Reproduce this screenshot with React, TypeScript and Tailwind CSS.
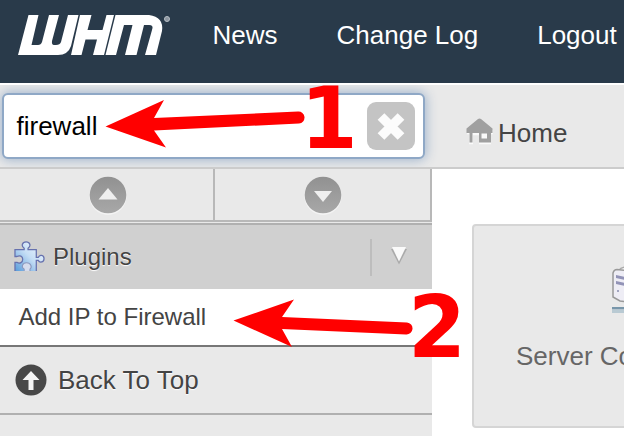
import React from 'react';

const Logo = () => (
  <svg className="ml-[18px] mt-[15px] h-[40px] w-[153px] shrink-0" viewBox="18 15 153 40" fill="#fff">
    <path d="M28.500 15H38.500L31.500 45H38Q41 45 42 42L49 15H59L52 41Q51.500 45 54 45H56Q60 45 61 42L68 15H78.500L71 46Q68 55 58 55H18Z" />
    <path d="M80 15H91.500L87.500 30H102.500L106.500 15H114L104 55H93L97 39.500H85.500L81.500 55H71Z" />
    <path d="M115.500 15H149Q164 17 162 31L156 55H145L152 30Q154 25 149 25H144L136.500 55H125L132.500 25H124L116 55H105.500Z" />
    <circle cx="167" cy="19" r="2.500" fill="#8c96a0" stroke="#b8bfc6" strokeWidth="1" />
  </svg>
);

const CircleTriangle = ({ down = false }: { down?: boolean }) => (
  <svg className="size-[40px]" viewBox="0 0 40 40">
    <defs>
      <linearGradient id={down ? 'discDown' : 'discUp'} x2="0" y2="1">
        <stop stopColor="#919191" />
        <stop offset="1" stopColor="#a8a8a8" />
      </linearGradient>
    </defs>
    <circle cx="20" cy="21.500" r="18.500" fill="#f4f4f4" />
    <circle cx="20" cy="20" r="18.300" fill={down ? 'url(#discDown)' : 'url(#discUp)'} />
    <path d={down ? 'M11 16H29L20 27Z' : 'M10.500 24.500H29.500L20 13Z'} fill="#efefef" />
  </svg>
);

const Puzzle = () => (
  <svg className="size-[31px]" viewBox="0 0 32 32">
    <defs>
      <linearGradient id="puzzleFill" x1="1" y1="0" x2="0" y2="1">
        <stop stopColor="#f5f9ff" />
        <stop offset=".5" stopColor="#c5def5" />
        <stop offset="1" stopColor="#579bda" />
      </linearGradient>
    </defs>
    <path d="M1 9H10.500V7.500C7 5 8.500 1 12.500 1S18 5 14.500 7.500V9H23V17H25C26.500 13.500 31 14.500 31 18.200S26.500 23 25 20H23V31H16.500V29C19 27 17.500 22.500 13 22.500S7 27 10.500 29V31H1V22H3C6 24 9 22 9 18.800S6 14.500 3 16H1Z" fill="url(#puzzleFill)" />
    <path d="M1 31V22H3C6 24 9 22 9 18.800S6 14.500 3 16H1V9H10.500V7.500C7 5 8.500 1 12.500 1S18 5 14.500 7.500V9H23V17H25C26.500 13.500 31 14.500 31 18.200S26.500 23 25 20H23V31" fill="none" stroke="#6671ae" strokeWidth="1.300" />
    <path d="M16.500 31V29C19 27 17.500 22.500 13 22.500S7 27 10.500 29V31" fill="#d5dced" stroke="#8998bf" strokeWidth="1.100" />
  </svg>
);

const House = () => (
  <svg className="h-[27px] w-[28px]" viewBox="0 0 28 27">
    <path d="M1 11L12 1.500Q13.500.500 15 1.500L27 11V15H25V25H13V16H7V25H3V15H1Z" fill="#fafafa" transform="translate(0 1.200)" />
    <path fillRule="evenodd" d="M.500 10.500L12 1Q13.500 0 15 1L26.500 10.500V15H25V24.500H13V15H6.500V24.500H3.500V15H.500ZM15.500 15.500V20.500H21V15.500Z" fill="#a0a0a0" />
  </svg>
);

const Server = () => (
  <svg className="h-[50px] w-[64px] shrink-0" viewBox="0 0 64 50">
    <path d="M7 4Q9 .5 18 1V34H7Z" fill="#fafafa" stroke="#aaa" strokeWidth="1.500" />
    <path d="M1 7Q2 3.500 5 3.500L18 5V36L8 35L1 31Z" fill="#eeedf5" stroke="#999" strokeWidth="1.500" />
    <path d="M4 9L13 11V14L4 12ZM4 15L13 17V20L4 18Z" fill="#9293b7" />
    <circle cx="6" cy="25" r="1" fill="#888dad" />
    <path d="M0 41H60V43.500H0Z" fill="#7896aa" />
    <path d="M0 43.500H60V47H0Z" fill="#b9cad3" />
  </svg>
);

export default function App() {
  return (
    <div className="relative flex h-[436px] w-[624px] flex-col overflow-hidden bg-white font-['Liberation_Sans',Arial,sans-serif] text-[26px] leading-[30px] text-[#444]">
      <header className="flex h-[83px] shrink-0 bg-[#293a4a] text-white">
        <Logo />
        <nav className="ml-[41.5px] flex gap-[59px] whitespace-nowrap pt-[20px]">
          <a>News</a>
          <a>Change Log</a>
          <a>Logout</a>
        </nav>
      </header>

      <section className="mt-[2px] flex h-[84px] shrink-0 overflow-hidden border-b-2 border-[#ccc] bg-[#e9e9e9]">
        <div className="w-[432px] shrink-0 pl-[2px] pt-[8px]">
          <div className="flex h-[66px] w-[423px] items-center justify-between rounded-[6px] border-2 border-[#8fa8c6] bg-white pl-[12.5px] pr-[8px] text-black shadow-[0_0_12px_1px_#9eb3cc]">
            <span>firewall</span>
            <button className="flex size-[48px] items-center justify-center rounded-[9px] bg-[#c4c4c4]">
              <svg className="size-[32px]" viewBox="0 0 32 32">
                <path d="M6 6.500L26 26.500M26 6.500L6 26.500" stroke="#fcfcfc" strokeWidth="9.500" />
              </svg>
            </button>
          </div>
        </div>
        <div className="flex pl-[34px] pt-[33px]">
          <House />
          <span className="ml-[4px]">Home</span>
        </div>
      </section>

      <main className="flex min-h-0 flex-1">
        <aside className="flex w-[432px] shrink-0 flex-col bg-[#e9e9e9]">
          <div className="flex h-[53px] shrink-0 border-b-2 border-[#b8b8b8]">
            <button className="flex w-[215px] items-center justify-center border-r-2 border-[#b8b8b8] pl-[2px]">
              <CircleTriangle />
            </button>
            <button className="flex w-[217px] items-center justify-center border-r-2 border-[#b8b8b8]">
              <CircleTriangle down />
            </button>
          </div>
          <div className="mt-px flex h-[66px] shrink-0 items-center border-t-2 border-[#b0b0b0] bg-[#d0d0d0] pl-[14px] text-[24px]">
            <div className="mt-[-2px]"><Puzzle /></div>
            <span className="ml-[8px] [text-shadow:0_1px_1px_#fff]">Plugins</span>
            <div className="ml-auto flex h-[37px] w-[62px] items-center border-l-2 border-[#bdbdbd] pl-[18px]">
              <svg className="h-[20px] w-[18px]" viewBox="0 0 18 20">
                <path d="M1 2H17L9 17.500Z" fill="#aaa" />
                <path d="M2 0H16L9 14.500Z" fill="#fafafa" />
              </svg>
            </div>
          </div>
          <div className="flex h-[58px] shrink-0 items-center border-b-2 border-[#777] bg-white pl-[18.5px] pb-px text-[24px]">Add IP to Firewall</div>
          <div className="flex h-[68px] shrink-0 items-center border-b-2 border-[#b0b0b0] pl-[15px]">
            <svg className="size-[32px]" viewBox="0 0 32 32">
              <circle cx="16" cy="16" r="15.500" fill="#484848" />
              <path d="M16 7L24.500 16H18.500V26H13.500V16H7.500Z" fill="#f4f4f4" />
            </svg>
            <span className="ml-[11px] [text-shadow:0_1px_1px_#fff]">Back To Top</span>
          </div>
        </aside>
        <div className="min-w-0 flex-1 overflow-hidden pl-[40px] pt-[55px]">
          <div className="flex h-[204px] w-[340px] flex-col rounded-[4px] border-2 border-[#d5d5d5] bg-[#e9e9e9] pt-[40px] text-[#666]">
            <div className="pl-[138px]"><Server /></div>
            <span className="mt-[25px] whitespace-nowrap pl-[42px]">Server Co</span>
          </div>
        </div>
      </main>

      <svg className="pointer-events-none absolute inset-0 h-[436px] w-[624px]" viewBox="0 0 624 436" fill="#f00">
        <path d="M105.500 126.500L164 100L154 118L298 111.500A6 6 0 0 1 299 123.500L154 130.500L166 147.500Z" />
        <path d="M233.500 320.500L294 299.500L282 317L407 322.500A6 6 0 0 1 406 334.500L282 329L292 347Z" />
        <text transform="translate(300.500 148) scale(.955 1)" className="font-['DejaVu_Sans',sans-serif] text-[86px] font-bold">1</text>
        <text transform="translate(408 357) scale(.97 1)" className="font-['DejaVu_Sans',sans-serif] text-[86px] font-bold">2</text>
      </svg>
    </div>
  );
}
